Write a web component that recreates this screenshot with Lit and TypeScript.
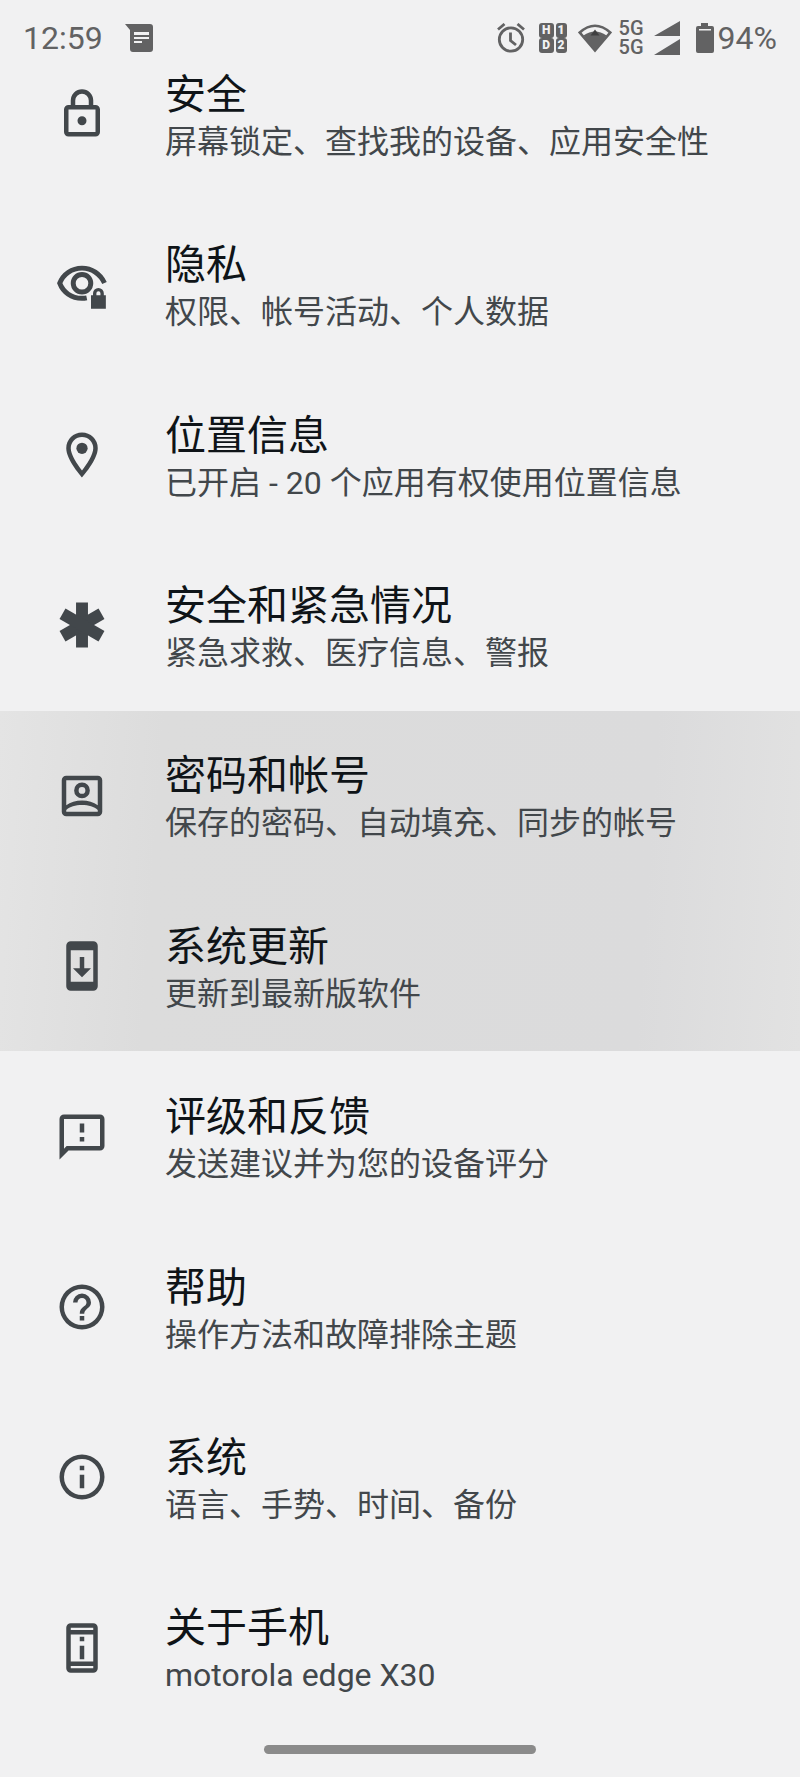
import { LitElement, html, css, svg } from "lit";
import { customElement, property } from "lit/decorators.js";

const icons: Record<string, unknown> = {
  lock: svg`<path d="M18 8h-1V6A5 5 0 0 0 7 6v2H6a2 2 0 0 0-2 2v10c0 1.100.9 2 2 2h12a2 2 0 0 0 2-2V10a2 2 0 0 0-2-2zM9 6a3 3 0 0 1 6 0v2H9zm9 14H6V10h12zm-6-3a2 2 0 1 0 0-4 2 2 0 0 0 0 4z"/>`,
  privacy: svg`<path d="M14.100 17.700Q13.100 17.900 12 17.900C7.400 17.900 3.600 15.300 2.100 11.200C3.700 7.100 7.500 4.500 12 4.500C16.300 4.500 20.100 7 22 11.100" fill="none" stroke="currentColor" stroke-width="2.200"/><circle cx="12" cy="11.200" r="3.900" fill="none" stroke="currentColor" stroke-width="2.200"/><path d="M22.600 16.500h-.900v-.8a2.400 2.400 0 0 0-4.800 0v.8h-.900v6h6.600v-6zm-4.200 0v-.8a.9.9 0 0 1 1.800 0v.8z"/>`,
  place: svg`<path d="M12 2a7 7 0 0 0-7 7c0 5.250 7 13 7 13s7-7.750 7-13a7 7 0 0 0-7-7zM7 9a5 5 0 0 1 10 0c0 2.880-2.880 7.190-5 9.880C9.920 16.210 7 11.850 7 9z"/><circle cx="12" cy="9" r="2.500"/>`,
  emergency: svg`<rect x="9.350" y="2" width="5.300" height="20"/><rect x="9.350" y="2" width="5.300" height="20" transform="rotate(60 12 12)"/><rect x="9.350" y="2" width="5.300" height="20" transform="rotate(-60 12 12)"/>`,
  account: svg`<path d="M19 3H5a2 2 0 0 0-2 2v14a2 2 0 0 0 2 2h14a2 2 0 0 0 2-2V5a2 2 0 0 0-2-2zm0 2v11.080C17.200 14.700 14.720 14 12 14s-5.200.7-7 2.080V5zM5 19v-.82C6.500 16.700 9.100 16 12 16s5.500.7 7 2.180V19z"/><path d="M12 13a3.500 3.500 0 1 0 0-7 3.500 3.500 0 0 0 0 7zm0-5a1.500 1.500 0 1 1 0 3 1.500 1.500 0 0 1 0-3z"/>`,
  update: svg`<path d="M17 1H7a2 2 0 0 0-2 2v18a2 2 0 0 0 2 2h10a2 2 0 0 0 2-2V3a2 2 0 0 0-2-2zm0 18H7V5h10zm-1-6h-3V8h-2v5H8l4 4z"/>`,
  feedback: svg`<path d="M20 2H4a2 2 0 0 0-2 2v18l4-4h14a2 2 0 0 0 2-2V4a2 2 0 0 0-2-2zm0 14H5.170L4 17.170V4h16zm-9-4h2v2h-2zm0-6h2v4h-2z"/>`,
  help: svg`<path d="M11 18h2v-2h-2zm1-16a10 10 0 1 0 0 20 10 10 0 0 0 0-20zm0 18a8 8 0 1 1 0-16 8 8 0 0 1 0 16zm0-14a4 4 0 0 0-4 4h2a2 2 0 0 1 4 0c0 2-3 1.750-3 5h2c0-2.250 3-2.500 3-5a4 4 0 0 0-4-4z"/>`,
  info: svg`<path d="M11 7h2v2h-2zm0 4h2v6h-2zm1-9a10 10 0 1 0 0 20 10 10 0 0 0 0-20zm0 18a8 8 0 1 1 0-16 8 8 0 0 1 0 16z"/>`,
  phone: svg`<path d="M17 1H7a2 2 0 0 0-2 2v18a2 2 0 0 0 2 2h10a2 2 0 0 0 2-2V3a2 2 0 0 0-2-2zm0 20H7v-1h10zm0-3H7V6h10zm0-14H7V3h10zM11 7h2v2h-2zm0 4h2v6h-2z"/>`,
};

interface Entry {
  icon: string;
  title: string;
  summary: string;
}

const groups: { pressed: boolean; entries: Entry[] }[] = [
  {
    pressed: false,
    entries: [
      { icon: "lock", title: "安全", summary: "屏幕锁定、查找我的设备、应用安全性" },
      { icon: "privacy", title: "隐私", summary: "权限、帐号活动、个人数据" },
      { icon: "place", title: "位置信息", summary: "已开启 - 20 个应用有权使用位置信息" },
      { icon: "emergency", title: "安全和紧急情况", summary: "紧急求救、医疗信息、警报" },
    ],
  },
  {
    pressed: true,
    entries: [
      { icon: "account", title: "密码和帐号", summary: "保存的密码、自动填充、同步的帐号" },
      { icon: "update", title: "系统更新", summary: "更新到最新版软件" },
    ],
  },
  {
    pressed: false,
    entries: [
      { icon: "feedback", title: "评级和反馈", summary: "发送建议并为您的设备评分" },
      { icon: "help", title: "帮助", summary: "操作方法和故障排除主题" },
      { icon: "info", title: "系统", summary: "语言、手势、时间、备份" },
      { icon: "phone", title: "关于手机", summary: "motorola edge X30" },
    ],
  },
];

@customElement("status-bar")
export class StatusBar extends LitElement {
  static styles = css`
    :host {
      display: flex;
      align-items: center;
      justify-content: space-between;
      box-sizing: border-box;
      height: 64px;
      padding: 12px 23px 0 23px;
      background: #f1f1f2;
      color: #626263;
      font-size: 32px;
      line-height: 40px;
    }
    .side {
      display: flex;
      align-items: center;
    }
    .left {
      gap: 22px;
    }
    svg {
      display: block;
      fill: currentColor;
    }
    .alarm {
      margin-right: 14px;
    }
    .sim {
      display: grid;
      grid-template-columns: 15px 11px;
      grid-template-rows: 15px 15px;
      column-gap: 2px;
      margin-right: 11px;
      font-size: 12px;
      font-weight: 900;
      line-height: 15px;
      text-align: center;
      color: #f1f1f2;
    }
    .cell {
      background: #626263;
      border-radius: 3px;
    }
    .net {
      display: grid;
      grid-template-rows: 19px 19px;
      margin: 0 10px 0 7px;
      font-size: 20px;
      line-height: 19px;
      font-weight: 500;
    }
    .battery {
      margin: 0 4px 0 16px;
    }
  `;

  render() {
    return html`
      <div class="side left">
        <span>12:59</span>
        <svg width="28" height="29" viewBox="0 0 28 29">
          <path fill-rule="evenodd" d="M0 0h25q3 0 3 3v22q0 3-3 3H8q-3 0-3-3V6zM9 8v3h15V8zm0 5v2h15v-2zm0 4v2h8v-2z" />
        </svg>
      </div>
      <div class="side">
        <svg class="alarm" width="28" height="30" viewBox="0 0 28 30">
          <g fill="none" stroke="currentColor" stroke-width="2.800">
            <circle cx="14" cy="16.500" r="11.700" />
            <path d="M13.500 9.500v8l5.500 4.500M1 6.500l6.500-5.500M27 6.500l-6.500-5.500" />
          </g>
        </svg>
        <div class="sim">
          <span class="cell">H</span><span class="cell">1</span>
          <span class="cell">D</span><span class="cell">2</span>
        </div>
        <svg width="34" height="29" viewBox="0 0 34 29">
          <path d="M1.800 8.500Q17-5 32.200 8.500L17 26.500z" fill="none" stroke="currentColor" stroke-width="2.600" />
          <path d="M5.500 11.500Q17 3.500 28.500 11.500L17 27z" />
          <path d="M17 5.500l4.500 6h-9z" fill="#3f3f40" />
        </svg>
        <div class="net"><span>5G</span><span>5G</span></div>
        <svg width="26" height="34" viewBox="0 0 26 34">
          <path d="M26 0v15H0zM26 18v16H0z" />
        </svg>
        <svg class="battery" width="18" height="30" viewBox="0 0 18 30">
          <path fill-rule="evenodd" d="M5 0h7v3h4q2 0 2 2v23q0 2-2 2H2q-2 0-2-2V5q0-2 2-2h3zM3 6v1.500h12V6z" />
        </svg>
        <span>94%</span>
      </div>
    `;
  }
}

@customElement("settings-row")
export class SettingsRow extends LitElement {
  @property({ attribute: false }) entry!: Entry;

  static styles = css`
    :host {
      display: flex;
      flex: 1 0 auto;
    }
    .row {
      display: flex;
      flex: 1;
      align-items: center;
      gap: 56px;
      padding: 32px 24px 32px 55px;
      color: #42474b;
      text-decoration: none;
    }
    .icon {
      flex: none;
      display: block;
      width: 54px;
      height: 54px;
      fill: currentColor;
    }
    .text {
      display: flex;
      flex-direction: column;
      padding-top: 5px;
    }
    .title {
      font-size: 41px;
      line-height: 51px;
      color: #0f1418;
    }
    .summary {
      font-size: 32px;
      line-height: 43px;
    }
  `;

  render() {
    return html`
      <a class="row" href="#${this.entry.icon}">
        <svg class="icon" viewBox="0 0 24 24" aria-hidden="true">${icons[this.entry.icon]}</svg>
        <span class="text">
          <span class="title">${this.entry.title}</span>
          <span class="summary">${this.entry.summary}</span>
        </span>
      </a>
    `;
  }
}

@customElement("app-root")
export class AppRoot extends LitElement {
  static styles = css`
    :host {
      display: flex;
      flex-direction: column;
      min-height: 100vh;
      background: #f1f1f2;
      font-family: Roboto, "Noto Sans CJK SC", sans-serif;
    }
    status-bar {
      position: sticky;
      top: 0;
      z-index: 1;
    }
    .list {
      display: flex;
      flex-direction: column;
      flex: 1;
      margin-top: -35px;
    }
    .group {
      display: flex;
      flex-direction: column;
      flex: 4 0 auto;
    }
    .pressed {
      flex-grow: 2;
      background: linear-gradient(94deg, #e4e4e4, #dcdcdc 20%, #dbdbdc 80%, #e2e2e2);
    }
    .nav {
      display: flex;
      justify-content: center;
      align-items: flex-start;
      height: 32px;
      padding-top: 12px;
    }
    .handle {
      width: 34%;
      height: 9px;
      border-radius: 5px;
      background: #8b8b8b;
    }
  `;

  render() {
    return html`
      <status-bar></status-bar>
      <main class="list">
        ${groups.map(
          (g) => html`<div class="group ${g.pressed ? "pressed" : ""}">
            ${g.entries.map((e) => html`<settings-row .entry=${e}></settings-row>`)}
          </div>`
        )}
      </main>
      <div class="nav"><div class="handle"></div></div>
    `;
  }
}
